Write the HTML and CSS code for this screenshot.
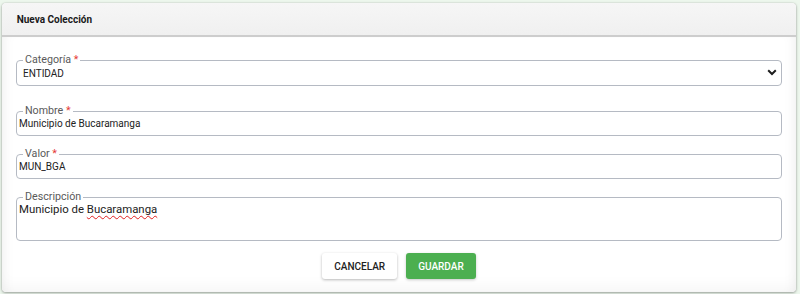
FILE: index.html
```html
<!DOCTYPE html>
<html lang="es">
<head>
<meta charset="utf-8">
<title>Nueva Colección</title>
<link rel="stylesheet" href="styles.css">
</head>
<body>
<div class="card">
  <div class="card-header">Nueva Colección</div>
  <div class="card-body">
    <fieldset class="field field-select">
      <legend>Categoría <span class="req">*</span></legend>
      <div class="control control-select">
        <span class="value">ENTIDAD</span>
        <svg class="chev" width="10" height="7" viewBox="0 0 10 7"><path d="M1.2 1.3 L5 5 L8.8 1.3" fill="none" stroke="#1e1e1e" stroke-width="2"/></svg>
      </div>
    </fieldset>
    <fieldset class="field field-nombre">
      <legend>Nombre <span class="req">*</span></legend>
      <div class="control">Municipio de Bucaramanga</div>
    </fieldset>
    <fieldset class="field field-valor">
      <legend>Valor <span class="req">*</span></legend>
      <div class="control">MUN_BGA</div>
    </fieldset>
    <fieldset class="field field-desc">
      <legend>Descripción</legend>
      <div class="control control-area">Municipio de <span class="spell">Bucaramanga</span></div>
    </fieldset>
    <div class="actions">
      <button class="btn btn-cancel">CANCELAR</button>
      <button class="btn btn-save">GUARDAR</button>
    </div>
  </div>
</div>
</body>
</html>
```
FILE: styles.css
```css
html, body {
  margin: 0;
  padding: 0;
}
body {
  background: #edf7ed;
  font-family: Roboto, "Noto Sans", Arial, sans-serif;
  width: 800px;
  height: 294px;
  overflow: hidden;
}
.card {
  margin: 3px 4px 0 2px;
  background: #fff;
  border-radius: 4px;
  box-shadow: 0 1px 3px rgba(0, 0, 0, 0.35), 0 0 1px rgba(0, 0, 0, 0.3);
  overflow: hidden;
}
.card-header {
  height: 32px;
  display: flex;
  align-items: center;
  padding-left: 14.7px;
  font-size: 10px;
  font-weight: 700;
  color: #1a1a1a;
  background: linear-gradient(to bottom, #f6f6f6, #f0f0f0);
  border-bottom: 2px solid #cdcdcd;
}
.card-body {
  padding: 17px 14px 13px 14px;
  background: #fff;
  box-shadow: inset 0 -10px 18px -8px rgba(0, 0, 0, 0.05), inset 10px 0 14px -10px rgba(0, 0, 0, 0.07), inset -10px 0 14px -10px rgba(0, 0, 0, 0.07);
}
.field {
  margin: 0;
  padding: 0;
  border: 1px solid #b5bac3;
  border-radius: 4px;
  min-width: 0;
}
.field legend {
  margin-left: 6px;
  padding: 0 2px;
  font-size: 10.7px;
  line-height: 12px;
  color: #5a5a5a;
}
.req {
  color: #e53935;
}
.control {
  font-size: 10px;
  line-height: 12px;
  color: #222;
  padding: 1px 4px 5px 2px;
}
.control-select {
  display: flex;
  align-items: center;
  padding: 2px 4px 5px 6px;
}
.control-select .value {
  flex: 1;
}
.chev {
  margin-right: 0;
  margin-top: -3px;
}
.field-nombre {
  margin-top: 19px;
}
.field-valor {
  margin-top: 12px;
}
.field-desc {
  margin-top: 12px;
}
.control-area {
  font-size: 11.4px;
  line-height: 12px;
  padding: 0 4px 0 2px;
  height: 37px;
}
.spell {
  text-decoration: underline wavy #e02020;
  text-decoration-thickness: 1px;
  text-underline-offset: 2px;
}
.actions {
  display: flex;
  justify-content: center;
  gap: 9px;
  margin-top: 12px;
}
.btn {
  height: 26px;
  padding: 0 12px;
  border: none;
  border-radius: 3px;
  font-family: Roboto, "Noto Sans", Arial, sans-serif;
  font-size: 10px;
  font-weight: 500;
}
.btn-cancel {
  background: #fff;
  color: #222;
  box-shadow: 0 1px 3px rgba(0, 0, 0, 0.28);
}
.btn-save {
  background: #4caf50;
  color: #fff;
  box-shadow: 0 1px 3px rgba(0, 0, 0, 0.22);
}
```
